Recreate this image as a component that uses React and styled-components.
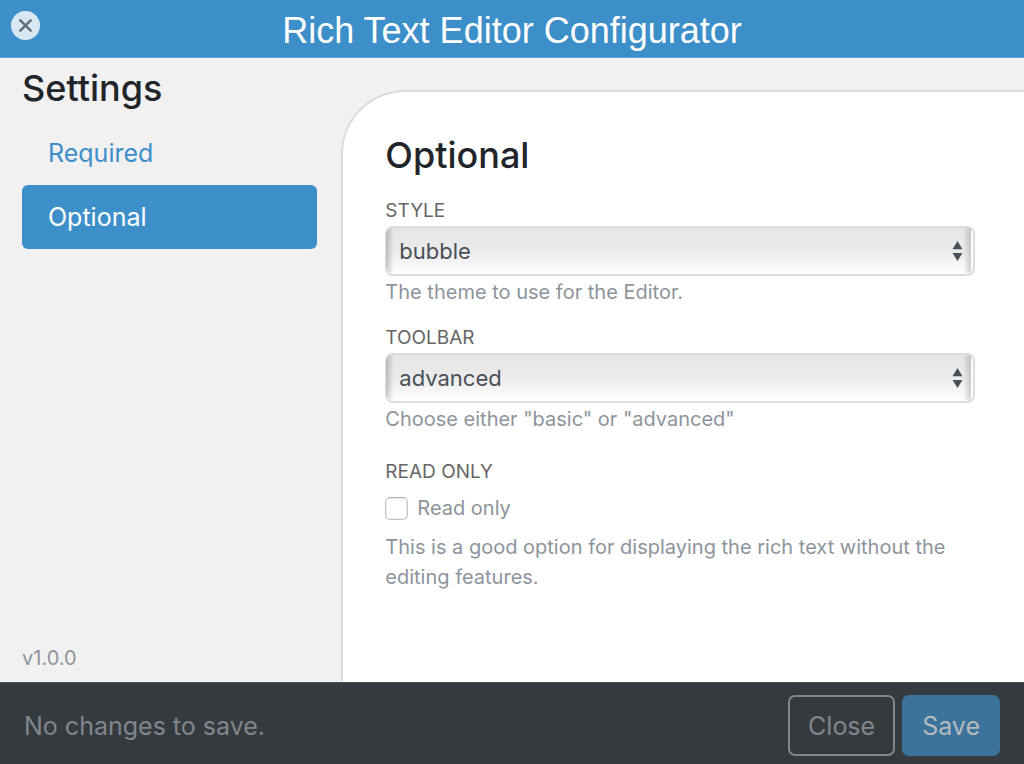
import React, { useState } from "react";
import styled, { createGlobalStyle } from "styled-components";

const GlobalStyle = createGlobalStyle`
  * { box-sizing: border-box; }
  body {
    margin: 0;
    background: #f1f1f1;
    color: #212529;
    font-family: Inter, "Liberation Sans", sans-serif;
    font-size: 20px;
    line-height: 30px;
  }
`;

const Page = styled.div`
  display: flex;
  flex-direction: column;
  min-height: 100vh;
`;

const Header = styled.header`
  display: grid;
  grid-template-columns: 29px 1fr 29px;
  align-items: start;
  padding: 11px 11px 6px;
  background: #3d8fca;
  border-bottom: 1px solid #69a8d6;
`;

const CloseIconButton = styled.button`
  display: flex;
  align-items: center;
  justify-content: center;
  width: 29px;
  height: 29px;
  padding: 0;
  border: 0;
  border-radius: 50%;
  background: #d8e8f3;
  color: #5f707c;
`;

const Title = styled.h1`
  margin: 0;
  color: #fff;
  font-family: "Liberation Sans", sans-serif;
  font-size: 36px;
  font-weight: 400;
  line-height: 40px;
  text-align: center;
`;

const Body = styled.div`
  flex: 1;
  display: grid;
  grid-template-columns: 1fr 2fr;
`;

const Sidebar = styled.aside`
  display: flex;
  flex-direction: column;
  padding: 8px 24px 9px 22px;
`;

const Heading = styled.h2`
  margin: 0;
  font-size: 36px;
  font-weight: 500;
  line-height: 44px;
`;

const Nav = styled.nav`
  display: flex;
  flex-direction: column;
  margin-top: 11px;
`;

const NavLink = styled.a`
  padding: 12px 26px;
  border-radius: 6px;
  font-size: 25px;
  line-height: 40px;
  text-decoration: none;
  color: ${(p) => (p.$active ? "#fff" : "#3d8fca")};
  background: ${(p) => (p.$active ? "#3d8fca" : "transparent")};
`;

const Version = styled.span`
  margin-top: auto;
  color: #8d949b;
`;

const Panel = styled.main`
  margin-top: 32px;
  padding: 41px 49px 24px 42px;
  background: #fff;
  border: 2px solid #dcdcdc;
  border-right: 0;
  border-bottom: 0;
  border-top-left-radius: 64px;
`;

const Field = styled.div`
  display: flex;
  flex-direction: column;
  margin-top: ${(p) => p.$gap}px;
`;

const Label = styled.label`
  color: #666;
  font-size: 19px;
  line-height: 30px;
  text-transform: uppercase;
`;

const SelectBox = styled.div`
  display: grid;
  align-items: center;

  > * { grid-area: 1 / 1; }
  > svg { justify-self: end; margin-right: 12px; pointer-events: none; }
`;

const Select = styled.select`
  appearance: none;
  width: 100%;
  height: 50px;
  padding: 0 40px 0 13px;
  border: 2px solid #dcdcdc;
  border-left-width: 1px;
  border-radius: 8px;
  background:
    linear-gradient(to right, rgba(0, 0, 0, 0.2), transparent) left / 8px 100% no-repeat,
    linear-gradient(to left, #fff 2px, rgba(0, 0, 0, 0.16) 2px, transparent) right / 10px 100% no-repeat,
    linear-gradient(#e5e5e5, #ebebeb 50%, #fff);
  box-shadow: inset 0 -1px 0 #fff;
  color: #495057;
  font-family: inherit;
  font-size: 22px;
`;

const Help = styled.p`
  margin: ${(p) => p.$gap}px 0 0;
  color: #8d949b;
  font-size: 20px;
  line-height: 30px;
`;

const CheckRow = styled.label`
  display: flex;
  align-items: center;
  gap: 9px;
  margin-top: 6px;
  color: #8d949b;
`;

const Checkbox = styled.input`
  appearance: none;
  width: 23px;
  height: 23px;
  margin: 0;
  border: 1px solid #c4c4c4;
  border-top-color: #b0b0b0;
  border-radius: 5px;
  background: #fff;
  box-shadow: inset 0 0 0 1px #ededed;

  &:checked { background: #3d8fca; }
`;

const Footer = styled.footer`
  display: flex;
  align-items: center;
  gap: 7px;
  padding: 12px 24px 8px;
  border-top: 1px solid #50555a;
  background: #353a3e;
`;

const Status = styled.span`
  flex: 1;
  color: #81868d;
  font-size: 25px;
`;

const Button = styled.button`
  height: 61px;
  padding: 0 18px;
  border: 2px solid ${(p) => (p.$primary ? "#3b739c" : "#81868d")};
  border-radius: 7px;
  background: ${(p) => (p.$primary ? "#3b739c" : "transparent")};
  color: ${(p) => (p.$primary ? "#b6babd" : "#81868d")};
  font-family: inherit;
  font-size: 25px;
`;

function SelectField({ id, label, help, options, initial, gap }) {
  const [value, setValue] = useState(initial);
  return (
    <Field $gap={gap}>
      <Label htmlFor={id}>{label}</Label>
      <SelectBox>
        <Select id={id} value={value} onChange={(e) => setValue(e.target.value)}>
          {options.map((o) => (
            <option key={o}>{o}</option>
          ))}
        </Select>
        <svg width="11" height="20" viewBox="0 0 11 20" fill="#495057" aria-hidden="true">
          <path d="M5.5 0L10.5 8.2H0.5zM5.5 20L10.5 12H0.5z" />
        </svg>
      </SelectBox>
      <Help $gap={1}>{help}</Help>
    </Field>
  );
}

export default function App() {
  return (
    <Page>
      <GlobalStyle />
      <Header>
        <CloseIconButton type="button" aria-label="Close">
          <svg width="13" height="13" viewBox="0 0 13 13" stroke="currentColor" strokeWidth="2.4" strokeLinecap="round" aria-hidden="true">
            <path d="M1.3 1.3L11.7 11.7M11.7 1.3L1.3 11.7" />
          </svg>
        </CloseIconButton>
        <Title>Rich Text Editor Configurator</Title>
      </Header>
      <Body>
        <Sidebar>
          <Heading>Settings</Heading>
          <Nav>
            <NavLink href="#required">Required</NavLink>
            <NavLink href="#optional" $active aria-current="page">Optional</NavLink>
          </Nav>
          <Version>v1.0.0</Version>
        </Sidebar>
        <Panel>
          <Heading>Optional</Heading>
          <SelectField
            id="style"
            label="Style"
            help="The theme to use for the Editor."
            options={["bubble", "snow"]}
            initial="bubble"
            gap={19}
          />
          <SelectField
            id="toolbar"
            label="Toolbar"
            help={'Choose either "basic" or "advanced"'}
            options={["basic", "advanced"]}
            initial="advanced"
            gap={16}
          />
          <Field $gap={23}>
            <Label htmlFor="readonly">Read only</Label>
            <CheckRow>
              <Checkbox id="readonly" type="checkbox" />
              Read only
            </CheckRow>
            <Help $gap={9}>
              This is a good option for displaying the rich text without the editing features.
            </Help>
          </Field>
        </Panel>
      </Body>
      <Footer>
        <Status>No changes to save.</Status>
        <Button type="button">Close</Button>
        <Button type="button" $primary>Save</Button>
      </Footer>
    </Page>
  );
}
